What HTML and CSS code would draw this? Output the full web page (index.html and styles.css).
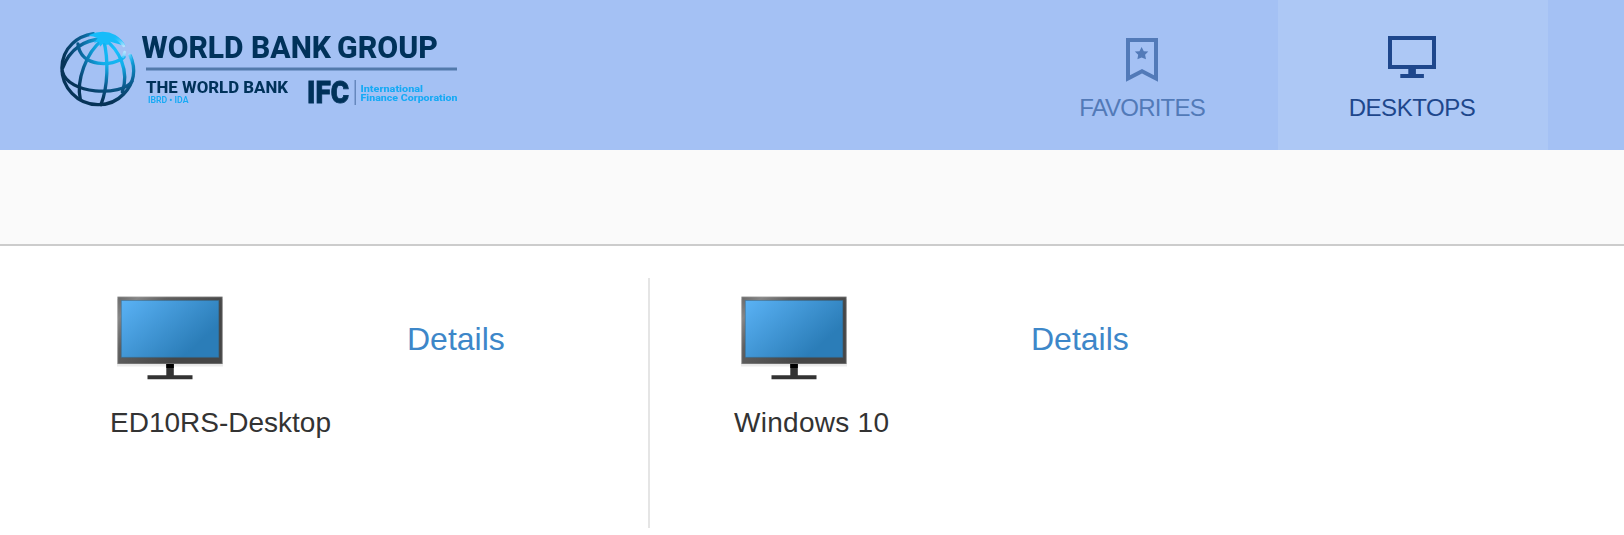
FILE: index.html
```html
<!DOCTYPE html>
<html lang="en">
<head>
<meta charset="utf-8">
<title>Desktops</title>
<link rel="stylesheet" href="styles.css">
</head>
<body>
<svg class="defs" width="0" height="0" aria-hidden="true">
  <defs>
    <linearGradient id="screen" x1="0" y1="0" x2="1" y2="0.65"><stop offset="0" stop-color="#5ab2f5"/><stop offset=".9" stop-color="#2b7db8"/></linearGradient>
    <linearGradient id="frame" x1="0" y1="0" x2="1" y2=".6"><stop offset="0" stop-color="#686868"/><stop offset=".15" stop-color="#858585"/><stop offset=".35" stop-color="#606060"/><stop offset=".8" stop-color="#464646"/></linearGradient>
    <g id="monitor">
      <rect class="shadow" x="7" y="5" width="106" height="67.5"/>
      <rect x="7.5" y="2.7" width="105" height="67.3" fill="url(#frame)"/>
      <rect x="7.8" y="3" width="104.4" height="66.7" fill="none" stroke="#b5b5b5" stroke-opacity=".45" stroke-width=".8"/>
      <rect x="11.3" y="6.5" width="97.5" height="56.8" fill="url(#screen)" stroke="#346b91" stroke-opacity=".6" stroke-width=".8"/>
      <path d="M56.3 70h7.5v11.3h18.7v4h-45v-4h18.8z" fill="#333"/>
      <path d="M56.3 70h7.5v4h-7.5z" fill="#000"/>
    </g>
  </defs>
</svg>
<header class="header">
  <svg class="logo" viewBox="50 20 420 100" role="img" aria-label="World Bank Group">
    <defs>
      <radialGradient id="globe" gradientUnits="userSpaceOnUse" cx="193" cy="92" r="180"><stop offset="0" stop-color="#16c0ff"/><stop offset=".28" stop-color="#11aeea"/><stop offset=".58" stop-color="#0b6095"/><stop offset=".85" stop-color="#063358"/></radialGradient>
      <radialGradient id="glow" gradientUnits="userSpaceOnUse" cx="226" cy="86" r="50"><stop offset="0" stop-color="#d4efff"/><stop offset=".4" stop-color="#8ddcff" stop-opacity=".8"/><stop offset="1" stop-color="#16c0ff" stop-opacity="0"/></radialGradient>
    </defs>
    <g transform="translate(50 20) scale(.3333)" fill="none" stroke-linecap="round">
      <g stroke="url(#globe)" stroke-width="10">
        <path d="M130 41C106 45 84 54 67 71C26 110 25 178 66 220C107 264 180 266 221 222C253 190 259 148 241 107"/>
        <path d="M84 72C91 143 190 141 222 111"/>
        <path d="M37 154C54 224 214 230 246 184"/>
        <path d="M157 60C109 97 78 181 91 239"/>
        <path d="M161 60C176 120 174 199 153 254"/>
        <path d="M166 60C206 88 239 151 217 216"/>
        <path d="M153 57C107 60 60 84 38 144"/>
      </g>
      <path d="M118 45Q160 26 196 45Q217 58 226 77Q204 72 181 65L171 76L162 68L150 80L147 65L132 68L143 55Q130 48 118 48Z" fill="#16bcfa"/>
      <path d="M190 50Q211 60 221 77M224 97L219 110M239 104L247 132" stroke="url(#glow)" stroke-width="9"/>
    </g>
    <g class="logo-text">
      <text x="141.5" y="57.9" font-size="31" textLength="189.5" lengthAdjust="spacingAndGlyphs">WORLD BANK</text>
      <text x="337" y="57.9" font-size="31" textLength="101" lengthAdjust="spacingAndGlyphs">GROUP</text>
      <path d="M146 67.6H457V70.4H146z" fill="#527aab"/>
      <text x="146" y="93.2" font-size="16.6" textLength="142" lengthAdjust="spacingAndGlyphs">THE WORLD BANK</text>
      <text class="cyan light" x="148" y="103.3" font-size="9" textLength="40.5" lengthAdjust="spacingAndGlyphs">IBRD • IDA</text>
      <text class="ifc" x="307" y="103.2" font-size="31" textLength="42" lengthAdjust="spacingAndGlyphs">IFC</text>
      <path d="M354.5 80v25h1.5v-25z" fill="#6688bd"/>
      <text class="cyan" x="360.5" y="91.5" font-size="9.8" textLength="62.5" lengthAdjust="spacingAndGlyphs">International</text>
      <text class="cyan" x="360.5" y="100.7" font-size="9.8" textLength="97" lengthAdjust="spacingAndGlyphs">Finance Corporation</text>
    </g>
  </svg>
  <nav class="tabs">
    <a class="tab tab-favorites">
      <svg class="tab-icon" viewBox="0 0 48 48">
        <path d="M10 4H38V42.5L24 35.2L10 42.5z" fill="none" stroke="currentColor" stroke-width="4"/>
        <path d="M23.6 11L25.8 15.2L30.3 15.5L27.1 18.7L28 23.2L23.6 21.6L19.4 23.2L20.2 18.7L16.8 15.5L21.5 15.2z" fill="currentColor"/>
      </svg>
      <span>FAVORITES</span>
    </a>
    <a class="tab tab-desktops">
      <svg class="tab-icon" viewBox="0 0 48 48">
        <path d="M2 2H46V31H2z" fill="none" stroke="currentColor" stroke-width="4"/>
        <path d="M20.3 32h7.6v6h8v4H12.3v-4h8z" fill="currentColor"/>
      </svg>
      <span>DESKTOPS</span>
    </a>
  </nav>
</header>
<div class="toolbar"></div>
<main class="cards">
  <section class="card">
    <div class="card-top">
      <svg class="monitor" viewBox="0 0 120 100"><use href="#monitor"/></svg>
      <a class="details">Details</a>
    </div>
    <p class="name">ED10RS-Desktop</p>
  </section>
  <section class="card">
    <div class="card-top">
      <svg class="monitor" viewBox="0 0 120 100"><use href="#monitor"/></svg>
      <a class="details">Details</a>
    </div>
    <p class="name name-wide">Windows 10</p>
  </section>
</main>
</body>
</html>
```
FILE: styles.css
```css
* { box-sizing: border-box; }
body {
  margin: 0;
  height: 535px;
  overflow: hidden;
  background: #fff;
  font-family: "Liberation Sans", Arial, sans-serif;
}
.defs { display: block; }
.header {
  display: flex;
  justify-content: space-between;
  height: 150px;
  padding: 0 76px 0 50px;
  background: #a4c1f4;
}
.logo { width: 420px; height: 100px; margin-top: 20px; filter: blur(0.4px); }
.logo-text {
  font-family: Roboto, sans-serif;
  font-weight: 800;
  fill: #00325a;
}
.ifc { font-weight: 900; stroke: #00325a; stroke-width: 0.8px; }
.cyan { fill: #16aaf5; }
.light { font-weight: 600; }
.tabs { display: flex; }
.tab {
  display: flex;
  flex-direction: column;
  align-items: center;
  width: 270px;
  padding: 36px 2px 0 0;
  font-size: 24px;
  line-height: 28px;
}
.tab-icon { width: 48px; height: 48px; margin-bottom: 10px; }
.tab-favorites { color: #527ab8; letter-spacing: -0.8px; }
.tab-desktops { color: #1e478c; background: #adc8f5; letter-spacing: -0.45px; }
.toolbar {
  height: 96px;
  background: #fafafa;
  border-bottom: 2px solid #ccc;
}
.cards { display: flex; padding: 32px 0 0 26px; }
.card { width: 624px; height: 250px; padding: 16px 0 0 84px; }
.card:first-child { border-right: 2px solid #e5e5e5; }
.card-top { display: flex; height: 113px; }
.monitor { width: 120px; height: 100px; }
.shadow { fill: #000; opacity: .08; }
.details {
  margin: 27px 0 0 177px;
  font-size: 32px;
  line-height: 37px;
  color: #3d87c9;
}
.name {
  margin: 0;
  font-size: 28px;
  line-height: 32px;
  color: #333;
}
.name-wide { letter-spacing: 0.28px; }
```
